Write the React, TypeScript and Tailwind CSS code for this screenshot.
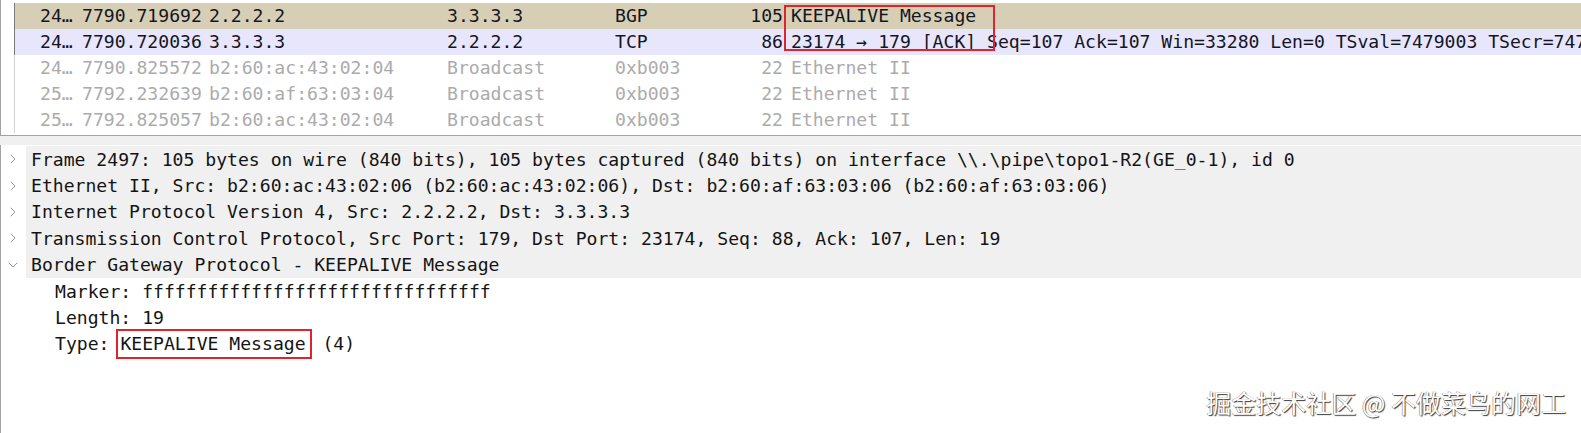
import { ChevronDown, ChevronRight } from "lucide-react";

type PacketRow = {
  no: string;
  time: string;
  src: string;
  dst: string;
  proto: string;
  len: string;
  info: string;
  bg: string;
  dim?: boolean;
};

const PACKETS: PacketRow[] = [
  { no: "24…", time: "7790.719692", src: "2.2.2.2", dst: "3.3.3.3", proto: "BGP", len: "105", info: "KEEPALIVE Message", bg: "bg-[#d6cfb5]" },
  {
    no: "24…",
    time: "7790.720036",
    src: "3.3.3.3",
    dst: "2.2.2.2",
    proto: "TCP",
    len: "86",
    info: "23174 → 179 [ACK] Seq=107 Ack=107 Win=33280 Len=0 TSval=7479003 TSecr=7479003",
    bg: "bg-[#e7e6fc]",
  },
  { no: "24…", time: "7790.825572", src: "b2:60:ac:43:02:04", dst: "Broadcast", proto: "0xb003", len: "22", info: "Ethernet II", bg: "bg-white", dim: true },
  { no: "25…", time: "7792.232639", src: "b2:60:af:63:03:04", dst: "Broadcast", proto: "0xb003", len: "22", info: "Ethernet II", bg: "bg-white", dim: true },
  { no: "25…", time: "7792.825057", src: "b2:60:ac:43:02:04", dst: "Broadcast", proto: "0xb003", len: "22", info: "Ethernet II", bg: "bg-white", dim: true },
];

const TREE = [
  "Frame 2497: 105 bytes on wire (840 bits), 105 bytes captured (840 bits) on interface \\\\.\\pipe\\topo1-R2(GE_0-1), id 0",
  "Ethernet II, Src: b2:60:ac:43:02:06 (b2:60:ac:43:02:06), Dst: b2:60:af:63:03:06 (b2:60:af:63:03:06)",
  "Internet Protocol Version 4, Src: 2.2.2.2, Dst: 3.3.3.3",
  "Transmission Control Protocol, Src Port: 179, Dst Port: 23174, Seq: 88, Ack: 107, Len: 19",
];

const mono = "font-['DejaVu_Sans_Mono',monospace] text-[18.1px]";

const PacketList = () => (
  <div className="relative h-[136px] shrink-0 overflow-hidden border-b border-l border-[#a3a3a3] bg-white pt-[3px]">
    {PACKETS.map((p, i) => (
      <div key={i} className="flex h-[26px] items-center">
        <div className="h-full w-[13px] shrink-0" />
        <div className={`h-full w-px shrink-0 ${p.dim ? "bg-[#d4d4d4]" : "bg-[#7a7a7a]"}`} />
        <div className={`flex h-full flex-1 items-center overflow-hidden whitespace-pre ${p.bg} ${p.dim ? "text-[#ababab]" : "text-[#15151f]"} ${mono}`}>
          <span className="w-[67px] shrink-0 pl-[25px]">{p.no}</span>
          <span className="w-[127px] shrink-0">{p.time}</span>
          <span className="w-[238px] shrink-0">{p.src}</span>
          <span className="w-[168px] shrink-0">{p.dst}</span>
          <span className="w-[100px] shrink-0">{p.proto}</span>
          <span className="w-[68px] shrink-0 text-right">{p.len}</span>
          <span className="pl-[8px]">{p.info}</span>
        </div>
      </div>
    ))}
    {/* annotation box over the info column */}
    <div className="absolute left-[783px] top-[5px] h-[46px] w-[211px] border-[2.5px] border-[#e0242c]" />
  </div>
);

const DetailTree = () => (
  <div className="relative flex-1 border-l border-[#a3a3a3] bg-white pt-px">
    {TREE.map((t, i) => (
      <div key={i} className="flex h-[26.4px] items-center">
        <div className="flex w-[25px] shrink-0 justify-center pr-px text-[#969696]">
          <ChevronRight size={16} strokeWidth={1.5} />
        </div>
        <div className={`flex h-full flex-1 items-center whitespace-pre bg-[#f0f0f0] pl-[5px] text-[#141414] ${mono}`}>{t}</div>
      </div>
    ))}
    <div className="flex h-[26.4px] items-center">
      <div className="flex w-[25px] shrink-0 justify-center pr-px text-[#969696]">
        <ChevronDown size={16} strokeWidth={1.5} />
      </div>
      <div className={`flex h-full flex-1 items-center whitespace-pre bg-[#f0f0f0] pl-[5px] text-[#141414] ${mono}`}>
        Border Gateway Protocol - KEEPALIVE Message
      </div>
    </div>
    <div className={`flex h-[26.4px] items-center whitespace-pre pl-[54px] text-[#141414] ${mono}`}>
      Marker: ffffffffffffffffffffffffffffffff
    </div>
    <div className={`flex h-[26.4px] items-center whitespace-pre pl-[54px] text-[#141414] ${mono}`}>Length: 19</div>
    <div className={`flex h-[26.4px] items-center whitespace-pre pl-[54px] text-[#141414] ${mono}`}>
      <span>Type: </span>
      <span className="ml-[-4px] inline-flex h-[30px] items-center border-[2.5px] border-[#e0242c] pl-[2px] pr-[4px]">KEEPALIVE Message</span>
      <span> (4)</span>
    </div>

    {/* watermark */}
    <div className="absolute bottom-[18px] right-[15px] whitespace-pre font-['Noto_Sans_CJK_SC',sans-serif] text-[25px] leading-none text-white [text-shadow:1px_1px_1px_#3a3a3a,-0.5px_-0.5px_0.5px_#777]">
      掘金技术社区 @ 不做菜鸟的网工
    </div>
  </div>
);

export default function App() {
  return (
    <div className="flex h-[433px] w-[1581px] flex-col overflow-hidden bg-white">
      <PacketList />
      <div className="h-[9px] shrink-0 bg-[#f0f0f0]" />
      <DetailTree />
    </div>
  );
}
